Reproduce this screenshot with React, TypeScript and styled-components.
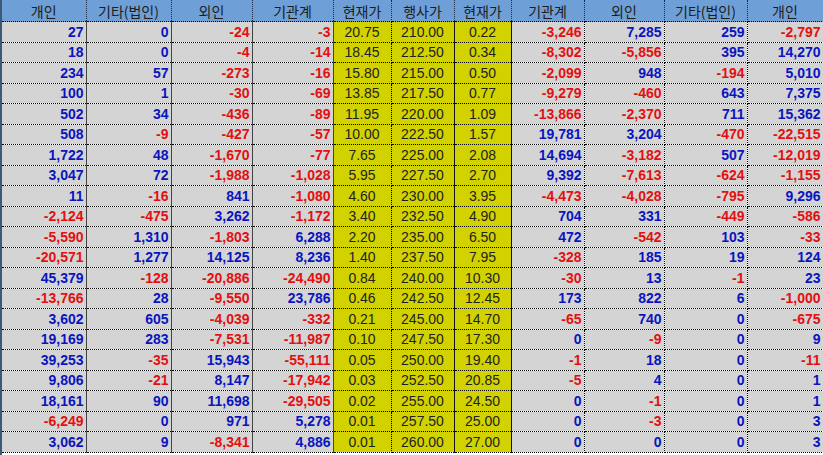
import React from 'react';
import styled, { createGlobalStyle } from 'styled-components';

const GlobalStyle = createGlobalStyle`
  html, body { margin: 0; padding: 0; background: #ffffff; }
  body { font-family: "Liberation Sans", "Noto Sans CJK KR", sans-serif; }
`;

type Col = { title: string; width: number; kind: 'num' | 'price'; edge: 'solid' | 'dotted' };

const columns: Array<Col> = [
  { title: '개인', width: 84, kind: 'num', edge: 'solid' },
  { title: '기타(법인)', width: 85, kind: 'num', edge: 'solid' },
  { title: '외인', width: 81, kind: 'num', edge: 'solid' },
  { title: '기관계', width: 81, kind: 'num', edge: 'solid' },
  { title: '현재가', width: 58, kind: 'price', edge: 'dotted' },
  { title: '행사가', width: 63, kind: 'price', edge: 'solid' },
  { title: '현재가', width: 57, kind: 'price', edge: 'solid' },
  { title: '기관계', width: 73, kind: 'num', edge: 'dotted' },
  { title: '외인', width: 80, kind: 'num', edge: 'dotted' },
  { title: '기타(법인)', width: 83, kind: 'num', edge: 'dotted' },
  { title: '개인', width: 76, kind: 'num', edge: 'dotted' },
];

const rows: Array<Array<number | string>> = [
  [27, 0, -24, -3, '20.75', '210.00', '0.22', -3246, 7285, 259, -2797],
  [18, 0, -4, -14, '18.45', '212.50', '0.34', -8302, -5856, 395, 14270],
  [234, 57, -273, -16, '15.80', '215.00', '0.50', -2099, 948, -194, 5010],
  [100, 1, -30, -69, '13.85', '217.50', '0.77', -9279, -460, 643, 7375],
  [502, 34, -436, -89, '11.95', '220.00', '1.09', -13866, -2370, 711, 15362],
  [508, -9, -427, -57, '10.00', '222.50', '1.57', 19781, 3204, -470, -22515],
  [1722, 48, -1670, -77, '7.65', '225.00', '2.08', 14694, -3182, 507, -12019],
  [3047, 72, -1988, -1028, '5.95', '227.50', '2.70', 9392, -7613, -624, -1155],
  [11, -16, 841, -1080, '4.60', '230.00', '3.95', -4473, -4028, -795, 9296],
  [-2124, -475, 3262, -1172, '3.40', '232.50', '4.90', 704, 331, -449, -586],
  [-5590, 1310, -1803, 6288, '2.20', '235.00', '6.50', 472, -542, 103, -33],
  [-20571, 1277, 14125, 8236, '1.40', '237.50', '7.95', -328, 185, 19, 124],
  [45379, -128, -20886, -24490, '0.84', '240.00', '10.30', -30, 13, -1, 23],
  [-13766, 28, -9550, 23786, '0.46', '242.50', '12.45', 173, 822, 6, -1000],
  [3602, 605, -4039, -332, '0.21', '245.00', '14.70', -65, 740, 0, -675],
  [19169, 283, -7531, -11987, '0.10', '247.50', '17.30', 0, -9, 0, 9],
  [39253, -35, 15943, -55111, '0.05', '250.00', '19.40', -1, 18, 0, -11],
  [9806, -21, 8147, -17942, '0.03', '252.50', '20.85', -5, 4, 0, 1],
  [18161, 90, 11698, -29505, '0.02', '255.00', '24.50', 0, -1, 0, 1],
  [-6249, 0, 971, 5278, '0.01', '257.50', '25.00', 0, -3, 0, 3],
  [3062, 9, -8341, 4886, '0.01', '260.00', '27.00', 0, 0, 0, 3],
];

const fmt = (n: number) => n.toLocaleString('en-US');

export default function App() {
  return (
    <Frame>
      <GlobalStyle />
      <Table>
        <colgroup>
          {columns.map((c, i) => (
            <col key={i} style={{ width: c.width }} />
          ))}
        </colgroup>
        <thead>
          <tr>
            {columns.map((c, i) => (
              <HeadCell key={i}>{c.title}</HeadCell>
            ))}
          </tr>
        </thead>
        <tbody>
          {rows.map((r, ri) => (
            <tr key={ri}>
              {r.map((v, ci) => {
                const col = columns[ci];
                if (col.kind === 'price') {
                  return (
                    <PriceCell key={ci} $edge={col.edge}>
                      {v}
                    </PriceCell>
                  );
                }
                const n = v as number;
                return (
                  <NumCell key={ci} $edge={col.edge} $neg={n < 0}>
                    {fmt(n)}
                  </NumCell>
                );
              })}
            </tr>
          ))}
        </tbody>
      </Table>
    </Frame>
  );
}

const Frame = styled.div`
  width: 823px;
  height: 455px;
  overflow: hidden;
  background: #ffffff;
  border-left: 2px solid #3c5a78;
  box-sizing: border-box;
`;

const Table = styled.table`
  table-layout: fixed;
  border-collapse: collapse;
  width: 821px;
`;

const HeadCell = styled.th`
  height: 21px;
  padding: 0;
  background: #6e9fd6;
  color: #1c1c1c;
  font-family: "Noto Sans CJK KR", sans-serif;
  font-weight: 400;
  font-size: 14px;
  line-height: 20px;
  text-align: center;
  border-right: 1px dotted #1a2a44;
  border-bottom: 1px dotted #000000;
  white-space: nowrap;
`;

const NumCell = styled.td<{ $edge: 'solid' | 'dotted'; $neg: boolean }>`
  height: 19.5px;
  padding: 0 2px 0 0;
  background: #d4d4d4;
  color: ${({ $neg }) => ($neg ? '#e31010' : '#0a14c0')};
  font-weight: 700;
  font-size: 14px;
  text-align: right;
  white-space: nowrap;
  overflow: hidden;
  border-bottom: 1px dotted #000000;
  border-right: ${({ $edge }) => ($edge === 'solid' ? '1px solid #444444' : '1px dotted #000000')};
`;

const PriceCell = styled.td<{ $edge: 'solid' | 'dotted' }>`
  height: 19.5px;
  padding: 0;
  background: #d2d200;
  color: #222222;
  font-size: 14px;
  text-align: center;
  white-space: nowrap;
  border-bottom: 1px dotted #000000;
  border-right: ${({ $edge }) => ($edge === 'solid' ? '1px solid #111111' : '1px dotted #000000')};
`;
